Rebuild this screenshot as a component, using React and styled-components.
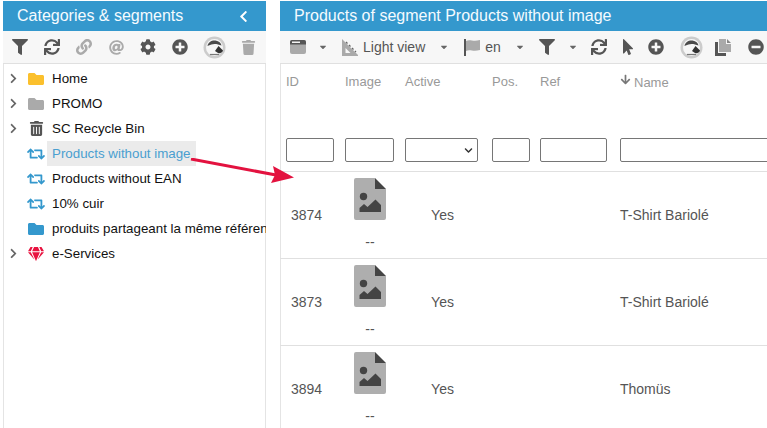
import styled, { createGlobalStyle } from "styled-components"
import {
    FaFilter, FaSync, FaLink, FaAt, FaCog, FaPlusCircle, FaTrash, FaTrashAlt, FaFolder, FaRetweet, FaGem,
    FaChevronRight, FaChevronLeft, FaMousePointer, FaMinusCircle, FaArrowDown, FaCaretDown, FaChevronDown,
} from "react-icons/fa"

const tree = [
    { label: "Home", arrow: true, icon: <FaFolder color="#fbc02d" size={16} /> },
    { label: "PROMO", arrow: true, icon: <FaFolder color="#aaaaaa" size={16} /> },
    { label: "SC Recycle Bin", arrow: true, icon: <FaTrashAlt color="#555555" size={15} /> },
    { label: "Products without image", icon: <FaRetweet color="#3498cd" size={18} />, selected: true },
    { label: "Products without EAN", icon: <FaRetweet color="#3498cd" size={18} /> },
    { label: "10% cuir", icon: <FaRetweet color="#3498cd" size={18} /> },
    { label: "produits partageant la même référence", icon: <FaFolder color="#3498cd" size={16} /> },
    { label: "e-Services", arrow: true, icon: <FaGem color="#e8123f" size={16} /> },
]

const products = [
    { id: 3874, name: "T-Shirt Bariolé" },
    { id: 3873, name: "T-Shirt Bariolé" },
    { id: 3894, name: "Thomüs" },
]

function MaskIcon() {
    return (
        <svg width="23" height="23" viewBox="0 0 23 23">
            <circle cx="11.5" cy="11.5" r="11" fill="#cccccc" />
            <circle cx="11.5" cy="11.5" r="8.5" fill="#f6f6f6" />
            <path d="M4.500 10C5 6 9 4 12.500 4.500C16 5 18 7 18.500 9.500C15 8 11 7.500 8.500 8.500C7 9 5.500 9.500 4.500 10Z" fill="#4a4a4a" />
            <path d="M12 15L15.500 10L20 14.500C19 17 17 17.500 15 17Z" fill="#333333" />
            <path d="M7 18.500H16" stroke="#777777" strokeWidth="1.2" />
        </svg>
    )
}

function SquareIcon() {
    return (
        <svg width="17" height="17" viewBox="0 0 17 17">
            <path fillRule="evenodd" d="M1 0L17 16V17H1ZM4.500 9V14H9.500Z" fill="#aaaaaa" />
            <path d="M5 3L6.500 4.500M8 6L9.500 7.500M11 9L12.500 10.500M14 12L15 13" stroke="#666666" strokeWidth="1.200" />
        </svg>
    )
}

function WindowIcon() {
    return (
        <svg width="16" height="14" viewBox="0 0 16 14">
            <rect width="16" height="14" rx="2" fill="#aaaaaa" />
            <path d="M2 0H14A2 2 0 0 1 16 2V4.500H0V2A2 2 0 0 1 2 0Z" fill="#555555" />
            <rect x="2" y="1.500" width="8" height="1.500" fill="#f4f4f4" />
        </svg>
    )
}

function TwoToneFlag() {
    return (
        <svg width="16" height="17" viewBox="0 0 16 17">
            <rect x="0" y="0" width="2" height="17" fill="#555555" />
            <path d="M2 2C6 0 9 3 16 1V11C9 13 6 10 2 12Z" fill="#aaaaaa" />
        </svg>
    )
}

function TwoToneCopy() {
    return (
        <svg width="16" height="17" viewBox="0 0 16 17">
            <path d="M0 3H3V14H11V17H0Z" fill="#555555" />
            <path d="M4 0H11V5H16V13H4Z" fill="#aaaaaa" />
            <path d="M12 0L16 4H12Z" fill="#888888" />
        </svg>
    )
}

function ImageFile() {
    return (
        <svg width="32" height="42" viewBox="0 0 32 42">
            <path d="M2 0H21V11H32V40A2 2 0 0 1 30 42H2A2 2 0 0 1 0 40V2A2 2 0 0 1 2 0Z" fill="#aeaeae" />
            <path d="M21 0L32 11H21Z" fill="#444444" />
            <circle cx="9.500" cy="18.500" r="3.700" fill="#444444" />
            <path d="M5.500 34V30L10 26L13.500 29L21.500 21.500L27 27V34Z" fill="#444444" />
        </svg>
    )
}

export default function App() {
    return (
        <>
            <GlobalStyle />
            <Page>
                <Panel $width="263px">
                    <Title>
                        Categories &amp; segments
                        <FaChevronLeft size={13} />
                    </Title>
                    <LeftBar>
                        <Tool><FaFilter size={16} /></Tool>
                        <Tool><FaSync size={16} /></Tool>
                        <Tool $off><FaLink size={16} /></Tool>
                        <Tool $off><FaAt size={15} /></Tool>
                        <Tool><FaCog size={16} /></Tool>
                        <Tool><FaPlusCircle size={16} /></Tool>
                        <Tool $ml="2px"><MaskIcon /></Tool>
                        <Tool $off $ml="2px"><FaTrash size={15} /></Tool>
                    </LeftBar>
                    <Tree>
                        {tree.map((item) => (
                            <TreeRow key={item.label}>
                                <Arrow>{item.arrow && <FaChevronRight size={11} />}</Arrow>
                                <TreeIcon>{item.icon}</TreeIcon>
                                <TreeLabel $selected={item.selected}>{item.label}</TreeLabel>
                            </TreeRow>
                        ))}
                    </Tree>
                </Panel>
                <Panel $main>
                    <Title $main>Products of segment Products without image</Title>
                    <MainBar>
                        <Tool $w="18px"><WindowIcon /></Tool>
                        <Caret $ml="11px" />
                        <Tool $w="17px" $ml="13px"><SquareIcon /></Tool>
                        <BarText>Light view</BarText>
                        <Caret $ml="14px" />
                        <Tool $w="16px" $ml="15px"><TwoToneFlag /></Tool>
                        <BarText>en</BarText>
                        <Caret $ml="14px" />
                        <Tool $w="16px" $ml="14px"><FaFilter size={16} /></Tool>
                        <Caret $ml="13px" />
                        <Tool $w="18px" $ml="12px"><FaSync size={16} /></Tool>
                        <Tool $w="12px" $ml="14px"><FaMousePointer size={16} /></Tool>
                        <Tool $w="16px" $ml="14px"><FaPlusCircle size={16} /></Tool>
                        <Tool $w="23px" $ml="16px"><MaskIcon /></Tool>
                        <Tool $w="16px" $ml="12px"><TwoToneCopy /></Tool>
                        <Tool $w="16px" $ml="17px"><FaMinusCircle size={16} /></Tool>
                    </MainBar>
                    <Columns>
                        <Heading>ID</Heading>
                        <Heading>Image</Heading>
                        <Heading>Active</Heading>
                        <Heading>Pos.</Heading>
                        <Heading>Ref</Heading>
                        <Heading><FaArrowDown size={11} />Name</Heading>
                    </Columns>
                    <Filters>
                        <FilterInput $w="48px" />
                        <FilterInput $w="49px" />
                        <FilterSelect>
                            <FaChevronDown size={9} />
                        </FilterSelect>
                        <FilterInput $w="38px" />
                        <FilterInput $w="67px" />
                        <FilterInput $w="160px" />
                    </Filters>
                    {products.map((p) => (
                        <Row key={p.id}>
                            <IdCell>{p.id}</IdCell>
                            <ImageCell>
                                <ImageFile />
                                <Dash>--</Dash>
                            </ImageCell>
                            <YesCell>Yes</YesCell>
                            <span />
                            <span />
                            <Cell>{p.name}</Cell>
                        </Row>
                    ))}
                </Panel>
                <Pointer width="110" height="30" viewBox="0 0 110 30">
                    <path d="M1 1L86 17" stroke="#e3123f" strokeWidth="3" />
                    <path d="M104 19.500L81 25L85 17L83 8Z" fill="#e3123f" />
                </Pointer>
            </Page>
        </>
    )
}

const GlobalStyle = createGlobalStyle`
    body {
        margin: 0;
        background: white;
        font-family: "Liberation Sans", Arial, sans-serif;
    }
`
const Page = styled.div`
    position: relative;
    display: flex;
    gap: 14px;
    width: 767px;
    height: 428px;
    padding: 1px 0 0 3px;
    box-sizing: border-box;
    overflow: hidden;
`
const Panel = styled.div`
    flex: ${(p) => (p.$main ? 1 : "none")};
    width: ${(p) => p.$width || "auto"};
    min-width: 0;
    height: 440px;
    overflow: hidden;
    box-shadow: inset ${(p) => (p.$main ? "1px 0 0 #e4e4e4" : "1px 0 0 #e4e4e4, inset -1px 0 0 #e4e4e4")};
`
const Title = styled.div`
    height: 30px;
    display: flex;
    justify-content: space-between;
    align-items: center;
    padding: 0 16px 0 14px;
    background-color: #3498cd;
    color: #f4fbff;
    font-size: 16px;
    svg {
        color: white;
    }
`
const LeftBar = styled.div`
    height: 33px;
    box-sizing: border-box;
    display: flex;
    align-items: center;
    gap: 9px;
    padding: 0 0 0 5.5px;
    background-color: #f7f7f7;
    border-bottom: 1px solid #e0e0e0;
`
const MainBar = styled(LeftBar)`
    gap: 0;
    padding: 0 0 0 9px;
`
const Tool = styled.span`
    display: flex;
    justify-content: center;
    align-items: center;
    width: ${(p) => p.$w || "23px"};
    flex: none;
    margin-left: ${(p) => p.$ml || "0"};
    color: ${(p) => (p.$off ? "#aaaaaa" : "#555555")};
`
const Caret = styled(FaCaretDown).attrs({ size: 10 })`
    flex: none;
    margin-left: ${(p) => p.$ml};
    color: #666666;
`
const BarText = styled.span`
    flex: none;
    margin-left: 5px;
    font-size: 14px;
    color: #555555;
`
const Tree = styled.div`
    padding-top: 2px;
`
const TreeRow = styled.div`
    height: 25px;
    display: flex;
    align-items: center;
    padding-left: 5px;
    white-space: nowrap;
`
const Arrow = styled.span`
    width: 17px;
    flex: none;
    display: flex;
    color: #666666;
`
const TreeIcon = styled.span`
    width: 22px;
    flex: none;
    display: flex;
    justify-content: center;
`
const TreeLabel = styled.span`
    padding: 0 5px;
    line-height: 25px;
    font-size: 13.33px;
    color: ${(p) => (p.$selected ? "#4a9fd0" : "#111111")};
    background-color: ${(p) => (p.$selected ? "#ebebeb" : "transparent")};
`
const tableColumns = `
    display: grid;
    grid-template-columns: 59px 60px 87px 48px 80px 1fr;
    padding-left: 6px;
`
const Columns = styled.div`
    ${tableColumns}
    height: 74px;
    padding-top: 10px;
    box-sizing: border-box;
`
const Heading = styled.span`
    font-size: 13px;
    color: #999999;
    svg {
        margin-right: 3px;
        color: #777777;
        vertical-align: 2px;
    }
`
const Filters = styled.div`
    ${tableColumns}
    height: 34px;
    box-sizing: border-box;
    border-bottom: 1px solid #e0e0e0;
`
const FilterInput = styled.div`
    box-sizing: border-box;
    width: ${(p) => p.$w};
    height: 24px;
    border: 1px solid #767676;
    border-radius: 2px;
`
const FilterSelect = styled(FilterInput)`
    width: 73px;
    display: flex;
    justify-content: flex-end;
    align-items: center;
    padding-right: 4px;
    color: #333333;
`
const Row = styled.div`
    ${tableColumns}
    height: 87px;
    box-sizing: border-box;
    border-bottom: 1px solid #e0e0e0;
`
const Cell = styled.span`
    font-size: 14px;
    color: #555555;
    align-self: center;
`
const IdCell = styled(Cell)`
    padding-left: 5px;
`
const YesCell = styled(Cell)`
    width: 75px;
    text-align: center;
`
const ImageCell = styled.div`
    width: 50px;
    padding-top: 6px;
    display: flex;
    flex-direction: column;
    align-items: center;
`
const Dash = styled.span`
    margin-top: 14px;
    font-size: 14px;
    color: #555555;
`
const Pointer = styled.svg`
    position: absolute;
    left: 190px;
    top: 158px;
`
